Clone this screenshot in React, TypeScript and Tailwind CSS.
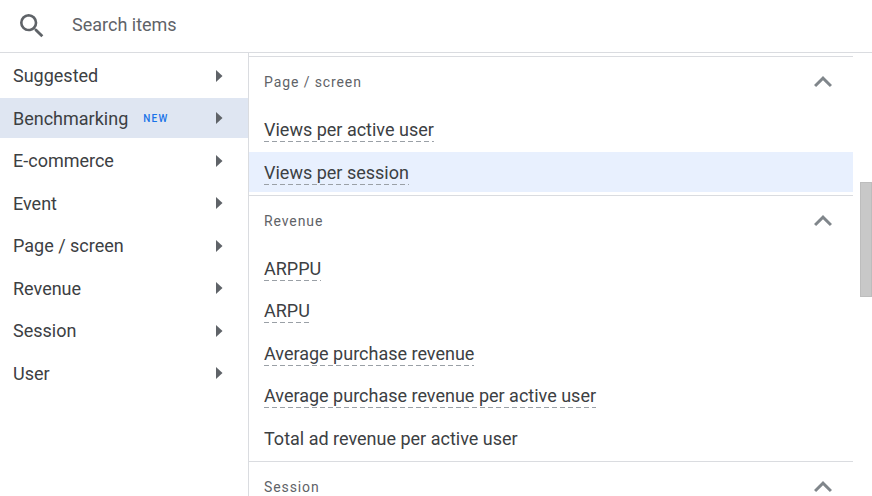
const categories = ['Suggested', 'Benchmarking', 'E-commerce', 'Event', 'Page / screen', 'Revenue', 'Session', 'User'];

const sections = [
  {
    title: 'Page / screen',
    items: [
      { label: 'Views per active user', dashed: true },
      { label: 'Views per session', dashed: true, selected: true },
    ],
  },
  {
    title: 'Revenue',
    items: [
      { label: 'ARPPU', dashed: true },
      { label: 'ARPU', dashed: true },
      { label: 'Average purchase revenue', dashed: true },
      { label: 'Average purchase revenue per active user', dashed: true },
      { label: 'Total ad revenue per active user', dashed: false },
    ],
  },
  { title: 'Session', items: [] },
];

export default function App() {
  return (
    <div className="flex h-[496px] w-[872px] flex-col overflow-hidden bg-white font-['Roboto',sans-serif] text-[#3c4043]">
      {/* Search */}
      <div className="flex h-[53px] shrink-0 items-center border-b border-[#dadce0] pl-[16px]">
        <svg viewBox="0 0 24 24" className="h-8 w-8 fill-[#5f6368]">
          <path d="M15.5 14h-.79l-.28-.27A6.471 6.471 0 0 0 16 9.5 6.5 6.5 0 1 0 9.5 16c1.61 0 3.09-.59 4.23-1.57l.27.28v.79l5 4.99L20.49 19l-4.99-5zm-6 0C7.01 14 5 11.99 5 9.5S7.01 5 9.5 5 14 7.01 14 9.5 11.99 14 9.5 14z" />
        </svg>
        <span className="mb-[3px] ml-6 text-[18px] text-[#5f6368]">Search items</span>
      </div>

      <div className="flex min-h-0 flex-1">
        {/* Categories */}
        <div className="w-[249px] shrink-0 border-r border-[#dadce0] pt-[2.5px]">
          {categories.map((name) => (
            <div
              key={name}
              className={`mb-[2.5px] flex h-10 items-center pl-[13px] pr-[25px] text-[18px] ${
                name === 'Benchmarking' ? 'bg-[#dfe6f2]' : ''
              }`}
            >
              <span>{name}</span>
              {name === 'Benchmarking' && (
                <span className="ml-[15px] text-[10px] font-medium tracking-[1.2px] text-[#1a73e8]">NEW</span>
              )}
              <svg viewBox="0 0 7 12" className="ml-auto h-3 w-[7px] fill-[#5f6368]">
                <path d="M0 0l6.5 6L0 12z" />
              </svg>
            </div>
          ))}
        </div>

        {/* Metrics */}
        <div className="min-w-0 flex-1 pt-[3px]">
          {sections.map((section) => (
            <div key={section.title} className="border-t border-[#dadce0] pb-[0.5px]">
              <div className="flex h-[52px] items-center justify-between pb-[1px] pl-[15px] pr-[12px] text-[14px] tracking-[0.9px] text-[#5f6368]">
                <span>{section.title}</span>
                <svg viewBox="0 0 24 24" className="mb-[1px] h-9 w-9 fill-[#80868b]">
                  <path d="M12 8l-6 6 1.41 1.41L12 10.83l4.59 4.58L18 14z" />
                </svg>
              </div>
              {section.items.map((item) => (
                <div
                  key={item.label}
                  className={`mb-[2.5px] flex h-10 items-center pl-[15px] text-[18px] ${
                    item.selected ? 'bg-[#e8f0fe]' : ''
                  }`}
                >
                  <span
                    className={
                      item.dashed
                        ? 'mt-[3px] bg-[repeating-linear-gradient(to_right,#9aa0a6_0,#9aa0a6_5px,transparent_5px,transparent_8px)] bg-[length:100%_1px] bg-bottom bg-no-repeat pb-[1px] leading-[22px]'
                        : 'mt-[2px] leading-[22px]'
                    }
                  >
                    {item.label}
                  </span>
                </div>
              ))}
            </div>
          ))}
        </div>

        {/* Scrollbar */}
        <div className="w-[19px] shrink-0 pl-[7px] pt-[129px]">
          <div className="h-[115px] w-3 border border-[#bdbdbd] bg-[#c8c8c8]" />
        </div>
      </div>
    </div>
  );
}
